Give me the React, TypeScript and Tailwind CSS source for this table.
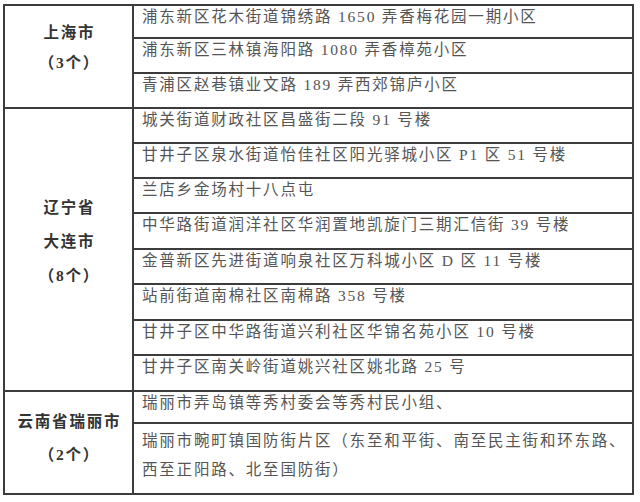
import React from 'react'

type Group = {
  label: string[]
  labelPad: string
  labelLeading: string
  rows: { text: string[]; h: string; border: boolean; leading?: string; pad?: string }[]
}

const font = {
  fontFamily: '"Liberation Serif", "Noto Sans CJK SC", serif',
}

const groups: Group[] = [
  {
    label: ['上海市', '（3个）'],
    labelPad: 'pt-[12px]',
    labelLeading: 'leading-[30px]',
    rows: [
      { text: ['浦东新区花木街道锦绣路 1650 弄香梅花园一期小区'], h: 'h-[33px]', border: true },
      { text: ['浦东新区三林镇海阳路 1080 弄香樟苑小区'], h: 'h-[35px]', border: true },
      { text: ['青浦区赵巷镇业文路 189 弄西郊锦庐小区'], h: 'h-[33px]', border: false },
    ],
  },
  {
    label: ['辽宁省', '大连市', '（8个）'],
    labelPad: 'pt-[82px]',
    labelLeading: 'leading-[34px]',
    rows: [
      { text: ['城关街道财政社区昌盛街二段 91 号楼'], h: 'h-[34.7px]', border: true },
      { text: ['甘井子区泉水街道怡佳社区阳光驿城小区 P1 区 51 号楼'], h: 'h-[35.4px]', border: true },
      { text: ['兰店乡金场村十八点屯'], h: 'h-[35.4px]', border: true },
      { text: ['中华路街道润洋社区华润置地凯旋门三期汇信街 39 号楼'], h: 'h-[35.4px]', border: true },
      { text: ['金普新区先进街道响泉社区万科城小区 D 区 11 号楼'], h: 'h-[35.4px]', border: true },
      { text: ['站前街道南棉社区南棉路 358 号楼'], h: 'h-[35.4px]', border: true },
      { text: ['甘井子区中华路街道兴利社区华锦名苑小区 10 号楼'], h: 'h-[35.4px]', border: true },
      { text: ['甘井子区南关岭街道姚兴社区姚北路 25 号'], h: 'h-[33.6px]', border: false },
    ],
  },
  {
    label: ['云南省瑞丽市', '（2个）'],
    labelPad: 'pt-[13px]',
    labelLeading: 'leading-[33px]',
    rows: [
      { text: ['瑞丽市弄岛镇等秀村委会等秀村民小组、'], h: 'h-[32.6px]', border: true },
      {
        text: ['瑞丽市畹町镇国防街片区（东至和平街、南至民主街和环东路、', '西至正阳路、北至国防街）'],
        h: 'h-[69px]',
        border: false,
        leading: 'leading-[29px]',
        pad: 'pt-[2px]',
      },
    ],
  },
]

export default function App() {
  return (
    <div className="min-h-[502px] w-[640px] bg-white pt-[4px] pl-[3px]" style={font}>
      <div className="box-border w-[631px] border-2 border-[#3c3c3c]">
        {groups.map((g, gi) => (
          <div
            key={gi}
            className={`flex ${gi < groups.length - 1 ? 'border-b-2 border-[#3c3c3c]' : ''}`}
          >
            {/* province / city label */}
            <div
              className={`box-border flex w-[129px] shrink-0 flex-col items-center border-r-2 border-[#3c3c3c] ${g.labelPad} ${g.labelLeading} text-[15.5px] font-bold tracking-[1.8px] text-[#333]`}
            >
              {g.label.map((l) => (
                <div key={l} className="pl-[1.8px]">
                  {l}
                </div>
              ))}
            </div>
            {/* addresses */}
            <div className="flex min-w-0 flex-1 flex-col">
              {g.rows.map((r, ri) => (
                <div
                  key={ri}
                  className={`box-border ${r.h} ${r.border ? 'border-b-2 border-[#3c3c3c]' : ''} ${r.pad ?? ''} ${r.leading ?? 'leading-[22px]'} pl-[8px] text-[15.5px] tracking-[1.8px] whitespace-nowrap text-[#555]`}
                >
                  {r.text.map((t) => (
                    <div key={t}>{t}</div>
                  ))}
                </div>
              ))}
            </div>
          </div>
        ))}
      </div>
    </div>
  )
}
